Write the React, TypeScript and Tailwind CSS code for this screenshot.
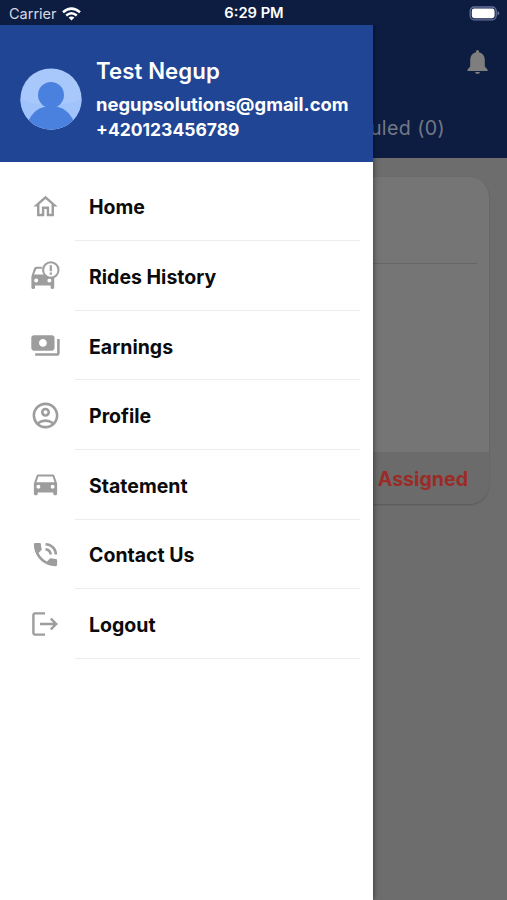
import React from 'react';
import {
  MdOutlineHome,
  MdPayments,
  MdOutlineAccountCircle,
  MdDirectionsCar,
  MdPhoneInTalk,
} from 'react-icons/md';

interface MenuItem {
  label: string;
  icon: React.ReactNode;
}

// Car with an alert bubble over its roof
const CarAlertIcon: React.FC = () => (
  <svg width="29" height="29" viewBox="0 0 29 29" fill="currentColor">
    <path
      fillRule="evenodd"
      d="M10.5 5.8H5.4Q3.6 5.8 3 7.6L.4 15.5V26.6Q.4 28 1.8 28H2.6Q4 28 4 26.6V24.6H19.6V26.6Q19.6 28 21 28H21.8Q23.2 28 23.2 26.6V15.5L19 13.4H3L5.4 7.8H11ZM5.2 17.4A2 2 0 1 1 5.2 21.4A2 2 0 1 1 5.2 17.4ZM18.4 17.4A2 2 0 1 1 18.4 21.4A2 2 0 1 1 18.4 17.4Z"
    />
    <circle cx="19.8" cy="9" r="7.7" fill="white" stroke="currentColor" strokeWidth="2" />
    <path d="M18.7 4.2H20.9V10.2H18.7ZM18.7 11.6H20.9V13.8H18.7Z" />
  </svg>
);

const LogoutIcon: React.FC = () => (
  <svg width="26" height="24" viewBox="0 0 26 24" fill="none" stroke="currentColor" strokeWidth="2.4">
    <path d="M13 1.4H3.2Q1.4 1.4 1.4 3.2V20.8Q1.4 22.6 3.2 22.6H13" />
    <path d="M8 12H24M18.8 6.6L24.2 12L18.8 17.4" />
  </svg>
);

const menuItems: MenuItem[] = [
  { label: 'Home', icon: <MdOutlineHome size={29} /> },
  { label: 'Rides History', icon: <CarAlertIcon /> },
  { label: 'Earnings', icon: <MdPayments size={31} /> },
  { label: 'Profile', icon: <MdOutlineAccountCircle size={31} /> },
  { label: 'Statement', icon: <MdDirectionsCar size={31} className="-mt-[2px]" /> },
  { label: 'Contact Us', icon: <MdPhoneInTalk size={31} /> },
  { label: 'Logout', icon: <LogoutIcon /> },
];

const StatusBar: React.FC = () => (
  <div className="absolute inset-x-0 top-0 z-20 grid h-[25px] grid-cols-3 items-center bg-[#0d1d42] pt-[2px] pr-[7px] pl-[9px] text-white">
    <div className="flex items-center gap-[5px] text-[14.5px] text-[#d5d9e4]">
      <span>Carrier</span>
      <svg width="19" height="14" viewBox="0 0 19 14" fill="none" stroke="white" strokeWidth="2.5">
        <path d="M1 5.2Q9.5 -2 18 5.2" />
        <path d="M4.2 8.5Q9.5 4 14.8 8.5" />
        <path d="M6.6 10.6Q9.5 8.2 12.4 10.6L9.5 13.6Z" fill="white" stroke="none" />
      </svg>
    </div>
    <span className="pr-[1px] text-center text-[14.7px] font-semibold whitespace-nowrap">6:29 PM</span>
    <svg className="justify-self-end" width="31" height="15" viewBox="0 0 31 15">
      <rect x="1.2" y="1" width="26" height="12.8" rx="4" fill="none" stroke="#66709a" strokeWidth="1.3" />
      <rect x="2.8" y="2.6" width="22.8" height="9.6" rx="2.4" fill="white" />
      <path d="M28.5 5V9.6Q30.3 8.8 30.3 7.3T28.5 5Z" fill="#66709a" />
    </svg>
  </div>
);

// Rides screen, already dimmed by the open drawer
const RidesScreen: React.FC = () => (
  <div className="flex h-full flex-col bg-[#6d6d6d]">
    <header className="flex h-[158px] flex-col items-end bg-[#0d1d42] pt-[47px]">
      <svg className="mr-[19px]" width="21" height="30" viewBox="0 0 21 30" fill="#7e7e7e">
        <path d="M10.5 3Q12 3 12 4.5V5.3Q17.8 6.8 17.8 13V19.5L20.6 22.8V24H.4V22.8L3.2 19.5V13Q3.2 6.8 9 5.3V4.5Q9 3 10.5 3ZM8 24.9H13Q12.6 27 10.5 27T8 24.9Z" />
      </svg>
      <div className="mt-[36px] mr-[62px] text-[19.6px] leading-[30px] tracking-[0.4px] text-[#747885]">
        Scheduled (0)
      </div>
    </header>
    <div className="mx-[18px] mt-[19px] flex h-[327px] flex-col overflow-hidden rounded-[20px] bg-[#757575] shadow-[0_1px_2px_rgba(0,0,0,0.2)]">
      <div className="mx-3 h-[87px] border-b border-[#666666]" />
      <div className="flex-1" />
      <div className="flex h-[52px] items-center justify-end bg-[#6b6b6b] pt-[3px] pr-[21px] text-[19.6px] font-bold text-[#9a2b26]">
        Assigned
      </div>
    </div>
  </div>
);

const Avatar: React.FC = () => (
  <svg className="shrink-0" width="62" height="62" viewBox="0 0 62 62">
    <defs>
      <clipPath id="avatar">
        <circle cx="31" cy="31" r="30.6" />
      </clipPath>
    </defs>
    <g clipPath="url(#avatar)">
      <rect width="62" height="62" fill="#a8c8fb" />
      <path d="M0 31Q31 43 62 31V62H0Z" fill="#9fc3fa" />
      <circle cx="31" cy="27" r="13" fill="#4a80de" />
      <path d="M7 56Q14 38 31 38T55 56V62H7Z" fill="#4a80de" />
    </g>
  </svg>
);

const Drawer: React.FC = () => (
  <aside className="absolute top-0 bottom-0 left-0 z-10 flex w-[372.5px] flex-col bg-white shadow-[0_0_6px_rgba(0,0,0,0.55)]">
    <div className="flex h-[162px] items-center gap-[14px] bg-[#204594] pt-[35px] pl-[20px] font-bold text-white">
      <Avatar />
      <div className="whitespace-nowrap">
        <div className="text-[22.2px] leading-[34px] font-semibold tracking-[0.1px]">Test Negup</div>
        <div className="mt-[3px] text-[18.4px] leading-[26px]">negupsolutions@gmail.com</div>
        <div className="text-[17.5px] leading-[26px]">+420123456789</div>
      </div>
    </div>
    <nav className="mt-[9.5px] flex flex-col">
      {menuItems.map((item) => (
        <div key={item.label} className="flex h-[69.67px]">
          <div className="flex w-[75px] items-center justify-center pl-[15px] text-[#9d9d9d]">{item.icon}</div>
          <div className="mr-[13px] flex flex-1 items-center border-b border-[#ececec] pt-[4px] pl-[14px] text-[19.5px] font-bold text-[#0b0b0b]">
            {item.label}
          </div>
        </div>
      ))}
    </nav>
  </aside>
);

export default function App() {
  return (
    <div className="relative h-[900px] w-[507px] overflow-hidden font-['Inter',sans-serif]">
      <RidesScreen />
      <Drawer />
      <StatusBar />
    </div>
  );
}
